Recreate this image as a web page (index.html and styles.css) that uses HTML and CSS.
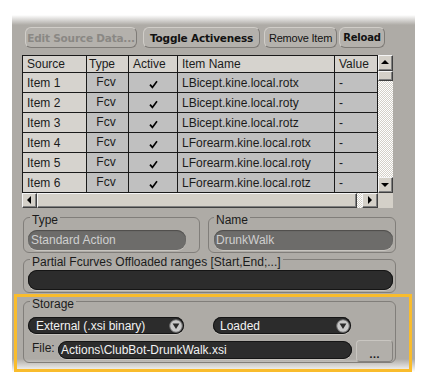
FILE: index.html
```html
<!DOCTYPE html>
<html lang="en">
<head>
    <meta charset="UTF-8">
    <title>Action Source</title>
    <link rel="stylesheet" href="styles.css">
</head>
<body>

    <div class="panel">

        <div class="toolbar">
            <button class="btn btn-edit" disabled>Edit Source Data...</button>
            <button class="btn btn-toggle">Toggle Activeness</button>
            <button class="btn btn-plain btn-remove">Remove Item</button>
            <button class="btn btn-reload">Reload</button>
        </div>

        <div class="grid">
            <div class="grid-view">
                <table class="items">
                    <thead>
                        <tr>
                            <th class="c-source">Source</th>
                            <th class="c-type">Type</th>
                            <th class="c-active">Active</th>
                            <th class="c-name">Item Name</th>
                            <th class="c-value">Value</th>
                        </tr>
                    </thead>
                    <tbody>
                        <tr><td class="src">Item 1</td><td class="fcv">Fcv</td><td class="chk"><svg class="tick" width="9" height="9" viewBox="0 0 9 9"><path d="M1 4.6 L3.4 7.4 L8 1.2"/></svg></td><td>LBicept.kine.local.rotx</td><td>-</td></tr>
                        <tr><td class="src">Item 2</td><td class="fcv">Fcv</td><td class="chk"><svg class="tick" width="9" height="9" viewBox="0 0 9 9"><path d="M1 4.6 L3.4 7.4 L8 1.2"/></svg></td><td>LBicept.kine.local.roty</td><td>-</td></tr>
                        <tr><td class="src">Item 3</td><td class="fcv">Fcv</td><td class="chk"><svg class="tick" width="9" height="9" viewBox="0 0 9 9"><path d="M1 4.6 L3.4 7.4 L8 1.2"/></svg></td><td>LBicept.kine.local.rotz</td><td>-</td></tr>
                        <tr><td class="src">Item 4</td><td class="fcv">Fcv</td><td class="chk"><svg class="tick" width="9" height="9" viewBox="0 0 9 9"><path d="M1 4.6 L3.4 7.4 L8 1.2"/></svg></td><td>LForearm.kine.local.rotx</td><td>-</td></tr>
                        <tr><td class="src">Item 5</td><td class="fcv">Fcv</td><td class="chk"><svg class="tick" width="9" height="9" viewBox="0 0 9 9"><path d="M1 4.6 L3.4 7.4 L8 1.2"/></svg></td><td>LForearm.kine.local.roty</td><td>-</td></tr>
                        <tr><td class="src">Item 6</td><td class="fcv">Fcv</td><td class="chk"><svg class="tick" width="9" height="9" viewBox="0 0 9 9"><path d="M1 4.6 L3.4 7.4 L8 1.2"/></svg></td><td>LForearm.kine.local.rotz</td><td>-</td></tr>
                    </tbody>
                </table>
            </div>

            <div class="vscroll">
                <div class="sb-btn sb-up"></div>
                <div class="sb-thumb sb-thumb-v"></div>
                <div class="sb-track"></div>
                <div class="sb-btn sb-down"></div>
            </div>

            <div class="hscroll">
                <div class="sb-btn sb-left"></div>
                <div class="sb-thumb sb-thumb-h"></div>
                <div class="sb-track"></div>
                <div class="sb-btn sb-right"></div>
            </div>

            <div class="sb-corner"></div>
        </div>

        <div class="group-row">
            <fieldset class="group group-type">
                <legend>Type</legend>
                <div class="field field-grey field-type">Standard Action</div>
            </fieldset>
            <fieldset class="group group-name">
                <legend>Name</legend>
                <div class="field field-grey field-name">DrunkWalk</div>
            </fieldset>
        </div>

        <fieldset class="group group-partial">
            <legend>Partial Fcurves Offloaded ranges [Start,End;...]</legend>
            <div class="field field-dark"></div>
        </fieldset>

        <fieldset class="group group-storage">
            <legend>Storage</legend>
            <div class="combo-row">
                <div class="combo combo-storage">
                    <span>External (.xsi binary)</span>
                    <svg class="combo-arrow" width="14" height="14" viewBox="0 0 14 14">
                        <circle cx="7" cy="7" r="6.3" fill="#c9c9c9" stroke="#6a6a6a" stroke-width="1"/>
                        <path d="M3.6 4.6 H10.4 L7 10 Z" fill="#2a2a2a"/>
                    </svg>
                </div>
                <div class="combo combo-state">
                    <span>Loaded</span>
                    <svg class="combo-arrow" width="14" height="14" viewBox="0 0 14 14">
                        <circle cx="7" cy="7" r="6.3" fill="#c9c9c9" stroke="#6a6a6a" stroke-width="1"/>
                        <path d="M3.6 4.6 H10.4 L7 10 Z" fill="#2a2a2a"/>
                    </svg>
                </div>
            </div>
            <div class="file-row">
                <span class="file-label">File:</span>
                <div class="field field-dark field-file">Actions\ClubBot-DrunkWalk.xsi</div>
                <button class="browse">...</button>
            </div>
        </fieldset>

        <!-- highlight frame drawn over the storage section -->
        <div class="highlight"></div>
    </div>

</body>
</html>
```

FILE: styles.css
```css
* {
    box-sizing: border-box;
}

body {
    margin: 0;
    background: #fff;
    font-family: "Liberation Sans", Arial, sans-serif;
    font-size: 12px;
    color: #1b1b1b;
}

.panel {
    position: relative;
    width: 403px;
    margin: 15px 0 0 12px;
    padding: 12px 0 9px;
    background: linear-gradient(#fff, #aeaba6 10px, #aeaba6 calc(100% - 13px), #fff);
}

/* buttons */
.toolbar {
    display: flex;
    margin-left: 13px;
    height: 21px;
}

.btn {
    height: 21px;
    padding: 0;
    margin: 0;
    border: 1px solid;
    border-color: #d0cdc8 #7e7b77 #7e7b77 #d0cdc8;
    border-radius: 6px;
    background: #b4b1ac;
    font-family: "DejaVu Sans", Verdana, sans-serif;
    font-weight: bold;
    font-size: 10.5px;
    letter-spacing: -0.2px;
    color: #121212;
}

.btn:disabled {
    color: #8a8884;
}

.btn-plain {
    font-family: "Liberation Sans", Arial, sans-serif;
    font-weight: normal;
    font-size: 11px;
    letter-spacing: -0.2px;
}

.btn-edit { width: 112px; }
.btn-toggle { width: 117px; margin-left: 6px; }
.btn-remove { width: 73px; margin-left: 4px; }
.btn-reload { width: 46px; margin-left: 2px; font-size: 10px; }

/* list view */
.grid {
    display: grid;
    grid-template-columns: 356px 15px;
    grid-template-rows: 138px 15px;
    width: 371px;
    margin: 7px 0 0 10px;
}

.grid-view {
    overflow: hidden;
}

.items {
    border-collapse: separate;
    border-spacing: 0;
    table-layout: fixed;
    width: 356px;
}

.items thead tr { height: 18px; }
.items tbody tr { height: 20px; }

.items th,
.items td {
    border-right: 1px solid #1a1a1a;
    border-bottom: 1px solid #1a1a1a;
    padding: 0 0 0 4px;
    text-align: left;
    font-weight: normal;
    white-space: nowrap;
    overflow: hidden;
    background: #c0c0c0;
    line-height: 16px;
}

.items th {
    border-top: 1px solid #1a1a1a;
    background: #d6d3ce;
}

.items th.c-source,
.items td.src {
    border-left: 1px solid #1a1a1a;
    background: #d6d3ce;
}

.items th.c-source { width: 65px; }
.items th.c-type { width: 42px; padding-left: 2px; }
.items th.c-active { width: 49px; }
.items th.c-name { width: 157px; }
.items th.c-value { width: 43px; }

.items td.fcv {
    text-align: center;
    padding: 0 3px 2px 0;
}

.items td.chk {
    text-align: center;
    padding: 3px 0 0 0;
}

.tick {
    display: inline-block;
    vertical-align: middle;
    fill: none;
    stroke: #000;
    stroke-width: 1.7;
}

/* scroll bars */
.vscroll {
    display: flex;
    flex-direction: column;
}

.hscroll {
    display: flex;
}

.sb-btn,
.sb-thumb,
.sb-corner {
    background: #d4d0c8;
}

.sb-btn,
.sb-thumb {
    position: relative;
    border: 1px solid;
    border-color: #f4f4f4 #404040 #404040 #f4f4f4;
    box-shadow: inset -1px -1px #808080;
}

.sb-up,
.sb-down { height: 16px; }
.sb-left { width: 15px; }
.sb-right { width: 16px; }

.sb-thumb-v { height: 10px; }
.sb-thumb-h { width: 320px; }

.sb-track {
    flex: 1;
    background: repeating-conic-gradient(#fff 0 25%, #d4d0c8 0 50%) 0 0 / 2px 2px;
}

.sb-btn::before {
    content: "";
    position: absolute;
    left: 50%;
    top: 50%;
    width: 0;
    height: 0;
    border: 4px solid transparent;
}

.sb-up::before {
    border-bottom-color: #000;
    border-top-width: 0;
    margin: -3px 0 0 -5px;
}

.sb-down::before {
    border-top-color: #000;
    border-bottom-width: 0;
    margin: -2px 0 0 -5px;
}

.sb-left::before {
    border-right-color: #000;
    border-width: 4px 4px 4px 0;
    margin: -5px 0 0 -3px;
}

.sb-right::before {
    border-left-color: #000;
    border-width: 4px 0 4px 4px;
    margin: -5px 0 0 -2px;
}

/* groups */
.group {
    margin: 0;
    padding: 0 2px 2px 4px;
    min-inline-size: 0;
    border: 1px solid #817e7a;
    border-radius: 6px;
}

.group legend {
    padding: 6px 2px 0;
    margin-left: 2px;
    line-height: 12px;
    color: #1b1b1b;
}

.group-row {
    display: flex;
    gap: 8px;
    margin-left: 11px;
}

.group-type {
    width: 177px;
    padding-top: 4px;
}

.group-name {
    width: 188px;
    padding: 4px 2px 2px 5px;
}

.group-name legend {
    margin-left: 0;
}

.group-partial {
    width: 373px;
    margin: -3px 0 0 11px;
    padding-top: 2px;
}

.group-storage {
    width: 373px;
    margin: -1px 0 0 11px;
    padding: 7px 2px 0 4px;
}

.field {
    height: 20px;
    border-radius: 9px;
    line-height: 20px;
    padding-left: 3px;
    white-space: nowrap;
}

.field-grey {
    background: #6d6c6a;
    color: #cfcfcf;
    box-shadow: inset 0 1px 1px #4e4d4b, 0 1px 0 #c8c5c0;
}

.field-type { width: 158px; }
.field-name { width: 179px; padding-left: 2px; }

.field-dark {
    background: #2c2c2c;
    color: #f2f2f2;
    box-shadow: inset 0 0 0 1px #151515, 0 1px 0 #c8c5c0;
}

.combo-row {
    display: flex;
    gap: 29px;
    height: 17px;
}

.combo {
    display: flex;
    align-items: center;
    justify-content: space-between;
    height: 17px;
    border-radius: 9px;
    padding: 0 1px 0 8px;
    background: #2c2c2c;
    color: #f2f2f2;
    box-shadow: inset 0 0 0 1px #151515, 0 1px 0 #c8c5c0;
}

.combo-storage { width: 156px; }
.combo-state { width: 138px; padding-left: 7px; }

.combo-arrow {
    display: block;
}

.file-row {
    display: flex;
    align-items: flex-start;
    margin-top: 6px;
    height: 22px;
}

.file-label {
    margin: 1px 0 0 4px;
    width: 26px;
    line-height: 14px;
}

.field-file {
    width: 294px;
    height: 18px;
    line-height: 18px;
    margin-top: 1px;
}

.browse {
    width: 37px;
    height: 22px;
    margin: 0 0 0 4px;
    padding: 8px 0 0;
    border: 1px solid;
    border-color: #c9c6c1 #85827e #85827e #c9c6c1;
    border-radius: 4px;
    background: #b2afaa;
    font-family: "DejaVu Sans", sans-serif;
    font-weight: bold;
    font-size: 9px;
    line-height: 10px;
    color: #1b1b1b;
}

/* annotation frame around the storage section */
.highlight {
    position: absolute;
    left: 2px;
    top: 279px;
    width: 398px;
    height: 78px;
    border: 3px solid #f9bc2c;
    pointer-events: none;
}
```
